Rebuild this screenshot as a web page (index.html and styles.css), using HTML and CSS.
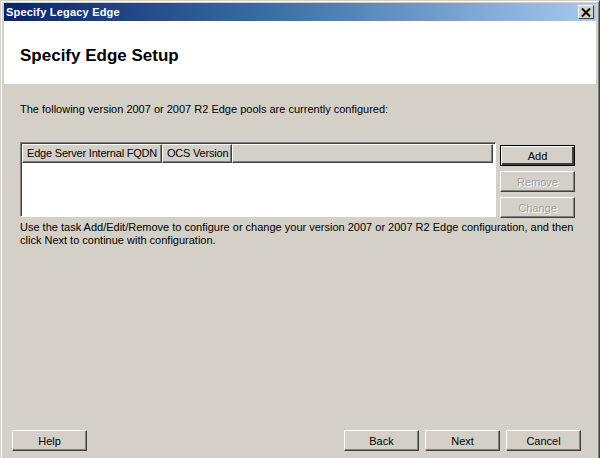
FILE: index.html
```html
<!DOCTYPE html>
<html>
<head>
<meta charset="utf-8">
<link rel="stylesheet" href="styles.css">
</head>
<body>
<div class="window">
  <div class="titlebar">
    <span class="title">Specify Legacy Edge</span>
    <span class="close">
      <svg width="10" height="9" viewBox="0 0 10 9"><path d="M1 0.5 L9 8.5 M9 0.5 L1 8.5" stroke="#000" stroke-width="2"/></svg>
    </span>
  </div>
  <div class="header">
    <h1 class="heading">Specify Edge Setup</h1>
  </div>
  <div class="content">
    <p class="intro">The following version 2007 or 2007 R2 Edge pools are currently configured:</p>
    <div class="listrow">
      <div class="listview">
        <div class="lv-head">
          <div class="col c1">Edge Server Internal FQDN</div>
          <div class="col c2">OCS Version</div>
          <div class="col c3"></div>
        </div>
        <div class="lv-body"></div>
      </div>
      <div class="sidebtns">
        <button class="btn default">Add</button>
        <button class="btn disabled">Remove</button>
        <button class="btn disabled">Change</button>
      </div>
    </div>
    <p class="note">Use the task Add/Edit/Remove to configure or change your version 2007 or 2007 R2 Edge configuration, and then click Next to continue with configuration.</p>
  </div>
  <div class="footer">
    <button class="btn">Help</button>
    <div class="spacer"></div>
    <button class="btn">Back</button>
    <button class="btn">Next</button>
    <button class="btn">Cancel</button>
  </div>
</div>
</body>
</html>
```
FILE: styles.css
```css
html, body {
  margin: 0;
  padding: 0;
  width: 600px;
  height: 458px;
  overflow: hidden;
  background: #d4d0c8;
}
.window {
  width: 600px;
  height: 470px;
  box-sizing: border-box;
  display: flex;
  flex-direction: column;
  background: #d4d0c8;
  border-top: 1px solid #d4d0c8;
  border-left: 1px solid #d4d0c8;
  border-right: 1px solid #404040;
  box-shadow: inset 1px 1px 0 #ffffff, inset -1px 0 0 #808080;
  padding: 2px 3px 0 3px;
  font-family: "Liberation Sans", Arial, sans-serif;
  font-size: 11px;
  color: #000;
}
.titlebar {
  height: 18px;
  display: flex;
  align-items: center;
  justify-content: space-between;
  background: linear-gradient(to right, #0a246a 0%, #3a6ea5 45%, #a6caf0 100%);
  padding: 0 2px 0 2px;
}
.title {
  color: #fff;
  font-weight: bold;
  font-size: 11px;
  letter-spacing: 0.2px;
}
.close {
  width: 16px;
  height: 14px;
  box-sizing: border-box;
  background: #d4d0c8;
  border: 1px solid;
  border-color: #ffffff #404040 #404040 #ffffff;
  display: flex;
  align-items: center;
  justify-content: center;
}
.header {
  height: 63px;
  background: #fff;
  border-bottom: 1px solid #d0d0d0;
  display: flex;
  align-items: center;
  padding-left: 16px;
}
.heading {
  margin: 0;
  font-size: 17px;
  font-weight: bold;
  padding-top: 7px;
}
.content {
  flex: 1;
  padding: 18px 20px 0 16px;
  display: flex;
  flex-direction: column;
}
.intro {
  margin: 0;
}
.listrow {
  display: flex;
  gap: 4px;
  margin-top: 27px;
}
.listview {
  width: 476px;
  height: 75px;
  box-sizing: border-box;
  border: 1px solid;
  border-color: #808080 #ffffff #ffffff #808080;
  box-shadow: inset 1px 1px 0 #404040;
  background: #fff;
  display: flex;
  flex-direction: column;
  padding: 1px 0 0 1px;
}
.lv-head {
  display: flex;
  height: 19px;
}
.col {
  box-sizing: border-box;
  background: #d4d0c8;
  border: 1px solid;
  border-color: #ffffff #404040 #404040 #ffffff;
  box-shadow: inset -1px -1px 0 #808080;
  padding: 2px 0 0 4px;
  white-space: nowrap;
  overflow: hidden;
  letter-spacing: -0.2px;
}
.c1 { width: 140px; }
.c2 { width: 70px; }
.c3 { flex: 1; margin-right: 2px; }
.lv-body { flex: 1; }
.sidebtns {
  display: flex;
  flex-direction: column;
  gap: 5px;
  padding-top: 3px;
}
.btn {
  width: 75px;
  height: 21px;
  box-sizing: border-box;
  font-family: "Liberation Sans", Arial, sans-serif;
  font-size: 11px;
  color: #000;
  background: #d4d0c8;
  border: 1px solid;
  border-color: #ffffff #404040 #404040 #ffffff;
  box-shadow: inset -1px -1px 0 #808080;
  padding: 0;
  margin: 0;
}
.btn.default {
  border: 1px solid #000;
  box-shadow: inset 1px 1px 0 #ffffff, inset -2px -2px 0 #404040;
}
.btn.disabled {
  color: #a0a0a0;
  text-shadow: 1px 1px 0 #ffffff;
}
.note {
  margin: 3px -12px 0 0;
  line-height: 13px;
}
.footer {
  display: flex;
  gap: 6px;
  padding: 0 15px 19px 8px;
}
.spacer { flex: 1; }
```
